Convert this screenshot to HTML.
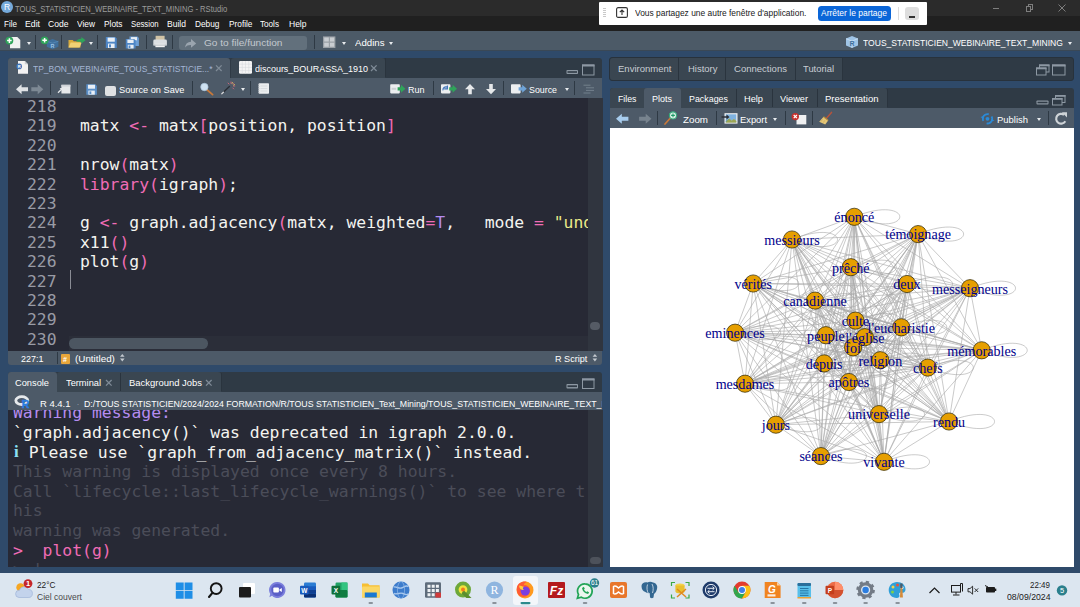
<!DOCTYPE html>
<html lang="fr">
<head>
<meta charset="utf-8">
<title>TOUS_STATISTICIEN_WEBINAIRE_TEXT_MINING - RStudio</title>
<style>
*{box-sizing:border-box;margin:0;padding:0}
html,body{width:1080px;height:607px;overflow:hidden;background:#2f4a6a}
body{position:relative;font-family:"Liberation Sans",sans-serif;font-size:10px;color:#fff}
.abs{position:absolute}
svg{position:absolute;overflow:visible}
.t{position:absolute;white-space:nowrap;line-height:1;font-size:9.3px;color:#fff;transform-origin:0 0}
.sep{position:absolute;width:1px;background:#2e3944}
.dd{position:absolute;width:0;height:0;border-left:2.5px solid transparent;border-right:2.5px solid transparent;border-top:3px solid #e8ebee}
/* window chrome */
#titlebar{left:0;top:0;width:1080px;height:15.500px;background:#2b2b2b}
#menubar{left:0;top:15.500px;width:1080px;height:15px;background:#202020}
#toolbar{left:0;top:30.500px;width:1080px;height:20.500px;background:#4c5a67;border-bottom:1px solid #3a4856}
#menubar .t{top:3px;font-size:9.7px;color:#fff;letter-spacing:-0.2px}
/* panels */
.tabrow{position:absolute;background:#2f3a45;border-radius:3px 3px 0 0}
.taboff{position:absolute;background:#3a4651;border-radius:3px 3px 0 0}
.tabon{position:absolute;background:#4d5a68;border-radius:3px 3px 0 0}
.bar{position:absolute;background:#4d5a68}
.tsep{position:absolute;width:1px;background:#2a343e}
.mono{font-family:"DejaVu Sans Mono","Liberation Mono",monospace}
#editor{left:8px;top:97.5px;width:594.5px;height:253.5px;background:#272935;overflow:hidden}
.ln{margin-top:2px;position:absolute;left:19px;font-size:16.4px;color:#999ba5;line-height:1;white-space:pre}
.cl{margin-top:2px;position:absolute;left:72px;font-size:16.4px;color:#f4f4f0;line-height:1;white-space:pre}
.pk{color:#f06cb6}.pu{color:#b58cf0}.ye{color:#ecec8a}
#console{left:8px;top:410px;width:594.5px;height:157px;background:#272935;overflow:hidden}
.co{margin-top:1.5px;position:absolute;left:5px;font-size:16.4px;line-height:1;white-space:pre;color:#f4f4f0}
.dim{color:#4b4d59}
/* taskbar */
#taskbar{left:0;top:572.5px;width:1080px;height:35px;background:#dce6f0}
</style>
</head>
<body>
<!-- ===== title bar ===== -->
<div id="titlebar" class="abs">
  <svg style="left:1px;top:1px" width="12" height="12" viewBox="0 0 12 12"><circle cx="6" cy="6" r="6" fill="#75aadb"/><text x="6" y="9" font-family="Liberation Sans, sans-serif" font-size="8.5" fill="#fff" text-anchor="middle">R</text></svg>
  <!-- window buttons -->
  <div class="abs" style="left:993px;top:8px;width:6px;height:1px;background:#7e7e7e"></div>
  <div class="abs" style="left:1027.500px;top:4px;width:5.500px;height:5.500px;border:1px solid #7e7e7e"></div><div class="abs" style="left:1025.500px;top:6px;width:5.500px;height:5.500px;border:1px solid #7e7e7e;background:#2b2b2b"></div>
  <svg style="left:1058px;top:4px" width="8" height="8" viewBox="0 0 8 8"><path d="M0.5 0.5L7.5 7.5M7.5 0.5L0.5 7.5" stroke="#7e7e7e" stroke-width="1"/></svg>
</div>

<!-- ===== menu bar ===== -->
<div id="menubar" class="abs">
</div>

<!-- ===== main toolbar ===== -->
<div id="toolbar" class="abs"></div>
<div class="abs" style="left:179px;top:36px;width:128px;height:13.500px;background:#62707c;border-radius:3px"></div>
<div class="dd" style="left:389px;top:42px"></div>
<div class="dd" style="left:1068px;top:42px"></div>
<div class="sep" style="left:35px;top:35px;height:14px"></div>
<div class="sep" style="left:61px;top:35px;height:14px"></div>
<div class="sep" style="left:97px;top:35px;height:14px"></div>
<div class="sep" style="left:146px;top:35px;height:14px"></div>
<div class="sep" style="left:172px;top:35px;height:14px"></div>
<div class="sep" style="left:314px;top:35px;height:14px"></div>
<div class="dd" style="left:27px;top:42px"></div>
<div class="dd" style="left:89px;top:42px"></div>
<div class="dd" style="left:342px;top:42px"></div>

<!-- ===== share banner ===== -->
<div class="abs" id="share" style="left:599px;top:2px;width:328px;height:22.500px;background:#fff;border-radius:1px">
  <div class="abs" style="left:4px;top:6px;width:3px;height:10px;background:repeating-linear-gradient(#c9c9c9 0 1px,#fff 1px 2px)"></div>
  <svg style="left:17px;top:5px" width="12" height="11" viewBox="0 0 12 11"><rect x="0.600" y="0.600" width="10.800" height="9.800" rx="1.500" fill="none" stroke="#333" stroke-width="1.100"/><path d="M6 8V3.200M3.800 5.200L6 3L8.200 5.200" fill="none" stroke="#333" stroke-width="1.100"/></svg>
  <div class="abs" style="left:219px;top:3.800px;width:73px;height:15.200px;background:#0b66d8;border-radius:3.500px"></div>
  <div class="abs" style="left:299px;top:5px;width:1px;height:13px;background:#dcdcdc"></div>
  <div class="abs" style="left:306px;top:4.500px;width:14px;height:13.500px;background:#dedede;border-radius:3px"></div>
  <div class="abs" style="left:310px;top:14px;width:6px;height:1.600px;background:#333"></div>
</div>
<!-- ===== main toolbar icons ===== -->
<svg style="left:0;top:31px" width="400" height="21" viewBox="0 31 400 21">
  <!-- new file -->
  <path d="M10 37h7.3l3 3v8.2H10z" fill="#f1f1f1"/>
  <circle cx="9.4" cy="40.6" r="3.9" fill="#2fa35a"/><path d="M9.4 38.3v4.6M7.1 40.6h4.6" stroke="#fff" stroke-width="1.5"/>
  <!-- new project -->
  <path d="M46.8 41.2l5.8-2.2 5.8 2.2v5.6l-5.8 2.4-5.8-2.4z" fill="#3f6f9c"/>
  <path d="M46.8 41.2l5.8 2 5.8-2" fill="none" stroke="#5d8fbd" stroke-width="0.7"/>
  <text x="52.6" y="47.6" font-family="Liberation Sans, sans-serif" font-size="5.5" font-weight="bold" fill="#9cc3e6" text-anchor="middle">R</text>
  <circle cx="44.6" cy="40.3" r="3.9" fill="#2fa35a"/><path d="M44.6 38v4.6M42.3 40.3h4.6" stroke="#fff" stroke-width="1.5"/>
  <!-- open folder -->
  <path d="M68.5 40h4.2l1.2 1.3h6.6v6.2H68.5z" fill="#d8ab3c"/>
  <path d="M68.5 47.5l2.2-5h11l-2.2 5z" fill="#f0d175"/>
  <path d="M76 41.5c1.2-2.2 3.2-2.9 5.4-2.7v-1.7l4.2 3.2-4.2 3.2v-1.8c-2-.2-3.8.1-5.4 -.2z" fill="#2fa35a"/>
  <!-- save -->
  <g id="floppy">
  <path d="M105.8 37h9.4l1.6 1.6v9.4h-11z" fill="#4e86c6"/>
  <rect x="107.6" y="37.6" width="7.2" height="4.1" fill="#e9eff6"/>
  <rect x="108" y="43.6" width="6.6" height="4.4" fill="#e9eff6"/>
  <rect x="109" y="44.4" width="2" height="3" fill="#4e86c6"/>
  </g>
  <!-- save all -->
  <path d="M129.5 36.6h8l1.4 1.4v8h-9.4z" fill="#6d9fd6"/><rect x="131" y="37.1" width="6" height="3.2" fill="#e9eff6"/>
  <path d="M125.8 39h8.3l1.5 1.5v8h-9.8z" fill="#4e86c6"/>
  <rect x="127.4" y="39.6" width="6.2" height="3.4" fill="#e9eff6"/>
  <rect x="127.8" y="44.8" width="5.8" height="3.7" fill="#e9eff6"/><rect x="128.6" y="45.5" width="1.8" height="2.5" fill="#4e86c6"/>
  <!-- print -->
  <rect x="155.6" y="35.8" width="9" height="4.6" fill="#d0c3a6"/>
  <rect x="153.3" y="39.6" width="13.6" height="6" rx="1.4" fill="#dcdfe2"/>
  <rect x="155.4" y="43.8" width="9.4" height="3.4" fill="#f3f3f3"/>
  <rect x="153.3" y="44.6" width="13.6" height="1" fill="#b9bec3"/>
  <!-- go to arrow -->
  <path d="M185 47.5c.4-3.6 2.4-5.6 6-5.8v-2.6l5.2 4.3-5.2 4.3v-2.7c-2.6-.1-4.5.7-6 2.5z" fill="#9aa4ae"/>
  <!-- grid / workspace panes -->
  <rect x="323" y="36.4" width="12.4" height="11.6" fill="#9aa0a6"/>
  <path d="M324.2 37.6h4.6v4h-4.6zM330 37.6h4.2v4H330zM324.2 42.8h4.6v4h-4.6zM330 42.8h4.2v4H330z" fill="#c9cdd1"/>
</svg>
<!-- project cube at right -->
<svg style="left:845px;top:35px" width="14" height="14" viewBox="0 0 14 14">
  <path d="M1 3.6L7 1l6 2.6v6.8L7 13 1 10.400z" fill="#9fc4e6"/>
  <path d="M1 3.6L7 6.200l6-2.600M7 6.200V13" fill="none" stroke="#d5e6f5" stroke-width="0.7"/>
  <text x="7" y="10.6" font-family="Liberation Sans, sans-serif" font-size="6.5" font-weight="bold" fill="#3f6f9c" text-anchor="middle">R</text>
</svg>
<!-- ===== source panel ===== -->
<div class="tabrow" style="left:8px;top:58px;width:594px;height:20px"></div>
<div class="taboff" style="left:231px;top:58px;width:154px;height:20px"></div>
<div class="tabon" style="left:8px;top:58px;width:222px;height:20px"></div>
<div class="tsep" style="left:385px;top:58px;height:19px"></div>
<div class="bar" style="left:8px;top:78px;width:594px;height:20px"></div>
<div class="dd" style="left:565px;top:88px"></div>
<div class="dd" style="left:241px;top:88px"></div>
<div class="sep" style="left:50px;top:81px;height:14px"></div>
<div class="sep" style="left:77px;top:81px;height:14px"></div>
<div class="sep" style="left:192px;top:81px;height:14px"></div>
<div class="sep" style="left:250px;top:81px;height:14px"></div>
<div class="sep" style="left:433px;top:81px;height:14px"></div>
<div class="sep" style="left:503px;top:81px;height:14px"></div>
<div class="sep" style="left:574px;top:81px;height:14px"></div>
<div class="abs" style="left:105px;top:86px;width:10.5px;height:9.5px;background:#dfe1e3;border-radius:2px"></div>

<div id="editor" class="abs mono">
  <div class="ln" style="top:-1px">218</div>
  <div class="ln" style="top:18px">219</div><div class="cl" style="top:18px">matx <span class="pk">&lt;-</span> matx<span class="pk">[</span>position, position<span class="pk">]</span></div>
  <div class="ln" style="top:38px">220</div>
  <div class="ln" style="top:57px">221</div><div class="cl" style="top:57px">nrow<span class="pk">(</span>matx<span class="pk">)</span></div>
  <div class="ln" style="top:77px">222</div><div class="cl" style="top:77px"><span class="pk">library(</span>igraph<span class="pk">)</span>;</div>
  <div class="ln" style="top:96px">223</div>
  <div class="ln" style="top:115px">224</div><div class="cl" style="top:115px">g <span class="pk">&lt;-</span> graph.adjacency<span class="pk">(</span>matx, weighted<span class="pk">=</span><span class="pu">T</span>,   mode <span class="pk">=</span> <span class="ye">"undirected"</span><span class="pk">)</span></div>
  <div class="ln" style="top:135px">225</div><div class="cl" style="top:135px">x11<span class="pk">()</span></div>
  <div class="ln" style="top:154px">226</div><div class="cl" style="top:154px">plot<span class="pk">(</span>g<span class="pk">)</span></div>
  <div class="ln" style="top:174px">227</div>
  <div class="ln" style="top:193px">228</div>
  <div class="ln" style="top:212px">229</div>
  <div class="ln" style="top:232px">230</div>
  <!-- cursor -->
  <div class="abs" style="left:62px;top:172px;width:1px;height:19px;background:#8a8c95"></div>
  <!-- v scrollbar track -->
  <div class="abs" style="left:580px;top:0;width:15px;height:254px;background:#30353f"></div>
  <div class="abs" style="left:582px;top:224px;width:10px;height:8.500px;border-radius:4.500px;background:#555b65"></div>
  <!-- h scrollbar -->
  <div class="abs" style="left:61px;top:238.500px;width:519px;height:15.500px;background:#2b2e39"></div>
  <div class="abs" style="left:61px;top:240.500px;width:139px;height:10.500px;border-radius:5.200px;background:#4c5661"></div>
</div>
<div class="bar" style="left:8px;top:351px;width:594px;height:14px;border-radius:0 0 3px 3px"></div>
<div class="sep" style="left:57px;top:352px;height:12px"></div>
<div class="abs" style="left:60.500px;top:354px;width:9.500px;height:9.500px;background:#e9a63a;border-radius:1px"></div>
<div class="t" style="left:63px;top:355.500px;font-size:7px;color:#fff;font-weight:bold">#</div>
<!-- ===== source pane icons ===== -->
<svg style="left:0;top:57px" width="610" height="42" viewBox="0 57 610 42">
  <!-- R file icon -->
  <path d="M18 61h6.8l3.2 3.200v9.600H18z" fill="#f2f2f2"/><path d="M24.8 61v3.200H28z" fill="#c9cdd2"/>
  <circle cx="19.200" cy="66.400" r="2.800" fill="#3f73b8"/>
  <text x="19.200" y="68" font-family="Liberation Sans, sans-serif" font-size="4.200" font-weight="bold" fill="#fff" text-anchor="middle">R</text>
  <!-- table icon -->
  <rect x="239" y="61" width="13" height="12.800" rx="1.300" fill="#f4f4f4"/>
  <path d="M239 64.200h13M239 67.400h13M239 70.600h13M242.250 61v12.800M245.500 61v12.800M248.750 61v12.800" stroke="#d3d6da" stroke-width="0.500"/>
  <!-- back / forward -->
  <path d="M16 89.300l5.600-5v3h6.400v4h-6.400v3z" fill="#dfe2e5"/>
  <path d="M43.300 89.300l-5.600-5v3h-6.400v4h6.400v3z" fill="#7d8994"/>
  <!-- pop-out -->
  <rect x="61.400" y="84.800" width="9" height="8.700" fill="#e6e8ea"/>
  <rect x="61.400" y="84.800" width="9" height="1.800" fill="#cfd3d7"/>
  <path d="M58 92.800l4-4" stroke="#e6e8ea" stroke-width="1.300"/><path d="M59.600 88h3.400v3.400z" fill="#e6e8ea"/>
  <!-- save -->
  <path d="M86.300 84.300h9l1.600 1.600v8.800H86.300z" fill="#5b90c9"/>
  <rect x="88" y="84.800" width="7" height="3.900" fill="#e9eff6"/>
  <rect x="88.400" y="90.600" width="6.400" height="4.100" fill="#e9eff6"/><rect x="89.400" y="91.400" width="1.900" height="2.700" fill="#5b90c9"/>
  <!-- magnifier -->
  <path d="M207 89.800l5.600 4.800" stroke="#c8793a" stroke-width="1.800" stroke-linecap="round"/>
  <circle cx="204.400" cy="87" r="3.700" fill="#cfe2f2" stroke="#a9c4dc" stroke-width="0.700"/>
  <!-- wand -->
  <path d="M221.800 93.800l7.600-7.400" stroke="#2b2f36" stroke-width="1.400" stroke-linecap="round"/>
  <path d="M221.800 93.800l1.600-1.500" stroke="#d8dadd" stroke-width="1.400" stroke-linecap="round"/>
  <path d="M231 81.600v2.200M234 82.800l-1.500 1.500M235.200 86h-2.200M234 89.200l-1.500-1.500M227.800 82.800l1.500 1.500" stroke="#e8677d" stroke-width="0.800"/>
  <path d="M232.600 82l-.7 1.800M235 84.400l-1.800.7" stroke="#f0d060" stroke-width="0.700"/>
  <!-- notebook -->
  <rect x="258.600" y="83.200" width="10.400" height="10.600" rx="0.800" fill="#eceef0"/>
  <path d="M260.500 86h6.800M260.500 88.500h6.800M260.500 91h6.800" stroke="#cdd1d5" stroke-width="0.600"/>
  <path d="M258 84.500h1.400M258 86.500h1.400M258 88.500h1.400M258 90.500h1.400M258 92.500h1.400" stroke="#aab0b6" stroke-width="0.700"/>
  <!-- Run -->
  <rect x="390.200" y="84.200" width="9.600" height="9.200" rx="0.800" fill="#eceef0"/>
  <path d="M391.600 87.800h4.600v2h-4.600z" fill="#cdd1d5"/>
  <path d="M397.600 87.200h3.400v-2.400l4.400 4-4.400 4v-2.400h-3.400z" fill="#2fa35a"/>
  <!-- re-run -->
  <rect x="441" y="84.200" width="9.400" height="9.200" rx="0.800" fill="#eceef0"/>
  <path d="M443 90.400c-.4-2.600 1.600-4 4.400-3.200M447.400 85.600v3.200h-3.200" fill="none" stroke="#3f73b8" stroke-width="1.200"/>
  <path d="M449.200 87.200h3.400v-2.400l4.400 4-4.400 4v-2.400h-3.400z" fill="#2fa35a"/>
  <!-- up / down -->
  <path d="M470 84l5 5.200h-3.200v5h-3.600v-5H465z" fill="#e6e8ea"/>
  <path d="M491 94.200l5-5.200h-3.200v-5h-3.600v5H486z" fill="#e6e8ea"/>
  <!-- source icon -->
  <rect x="511" y="84.200" width="9.600" height="9.200" rx="0.800" fill="#eceef0"/>
  <path d="M518.600 87.200h3.600v-2.400l4.600 4-4.600 4v-2.400h-3.600z" fill="#6fa4d8"/>
  <!-- outline -->
  <path d="M583.500 85.200h7M586 87.800h8M586 90.400h8M583.500 93h7" stroke="#73808c" stroke-width="1"/>
  <!-- min / max -->
  <rect x="566.500" y="70" width="11.500" height="4" rx="0.800" fill="#8d98a3"/><rect x="567.500" y="71.200" width="9.500" height="1.600" fill="#2f3a45"/>
  <rect x="582.500" y="65" width="11.500" height="10" fill="none" stroke="#8d98a3" stroke-width="1"/><rect x="582" y="64.500" width="12.500" height="2" fill="#8d98a3"/>
</svg>
<!-- ===== console panel ===== -->
<div class="tabrow" style="left:8px;top:372px;width:594px;height:20px"></div>
<div class="taboff" style="left:57px;top:372px;width:164px;height:20px"></div>
<div class="tabon" style="left:8px;top:372px;width:49px;height:20px"></div>
<div class="tsep" style="left:120px;top:373px;height:18px"></div>
<div class="tsep" style="left:221px;top:373px;height:18px"></div>
<div class="bar" style="left:8px;top:392px;width:594px;height:18px"></div>
<div id="console" class="abs mono">
  <div class="co" style="top:-7px;color:#b58cf0">Warning message:</div>
  <div class="co" style="top:13px">`graph.adjacency()` was deprecated in igraph 2.0.0.</div>
  <div class="co" style="top:33px;padding-left:15.800px"><span style="position:absolute;left:1px;top:-1.500px;color:#8be0f5;font-weight:bold;font-family:'Liberation Serif',serif;font-size:17px;line-height:1">i</span>Please use `graph_from_adjacency_matrix()` instead.</div>
  <div class="co dim" style="top:52px">This warning is displayed once every 8 hours.</div>
  <div class="co dim" style="top:72px">Call `lifecycle::last_lifecycle_warnings()` to see where t</div>
  <div class="co dim" style="top:91px">his</div>
  <div class="co dim" style="top:111px">warning was generated.</div>
  <div class="co" style="top:131px;color:#f06cb6">&gt;  plot(g)</div>
  <div class="co dim" style="top:150px">&gt; |</div>
  <div class="abs" style="left:580px;top:0;width:15px;height:157px;background:#30353f"></div>
  <div class="abs" style="left:582px;top:146.500px;width:10.500px;height:7.500px;border-radius:4px;background:#4d525b"></div>
</div>
<!-- ===== console pane icons ===== -->
<svg style="left:0;top:371px" width="610" height="40" viewBox="0 371 610 40">
  <!-- R logo -->
  <ellipse cx="21.800" cy="400.600" rx="6" ry="3.900" fill="none" stroke="#e6e9ec" stroke-width="2.800"/>
  <text x="25.600" y="407.800" font-family="Liberation Sans, sans-serif" font-size="10.500" font-weight="bold" fill="#2a7de1" stroke="#2a7de1" stroke-width="0.500" text-anchor="middle">R</text>
  <!-- min / max -->
  <rect x="566.500" y="384" width="11.500" height="4.500" rx="0.800" fill="#8d98a3"/><rect x="567.500" y="385.300" width="9.500" height="1.800" fill="#2f3a45"/>
  <rect x="582.500" y="379" width="11.500" height="9.500" fill="none" stroke="#8d98a3" stroke-width="1"/><rect x="582" y="378.500" width="12.500" height="2" fill="#8d98a3"/>
</svg>
<!-- close marks and steppers -->
<svg style="left:0;top:0" width="610" height="400" viewBox="0 0 610 400">
<path d="M216 65.4l5.6 5.6M221.6 65.4l-5.6 5.6" stroke="#7f8b97" stroke-width="1.300" fill="none"/>
<path d="M371 65.4l5.6 5.6M376.6 65.4l-5.6 5.6" stroke="#7f8b97" stroke-width="1.300" fill="none"/>
<path d="M106 380l5.6 5.6M111.6 380l-5.6 5.6" stroke="#7f8b97" stroke-width="1.300" fill="none"/>
<path d="M206 380l5.6 5.6M211.6 380l-5.6 5.6" stroke="#7f8b97" stroke-width="1.300" fill="none"/>
<path d="M120 356.8l2.300-2.800 2.300 2.800zM120 358.6l2.300 2.800 2.300-2.800z" fill="#c3c9cf"/>
<path d="M592.6 356.8l2.300-2.800 2.300 2.800zM592.6 358.6l2.300 2.800 2.300-2.800z" fill="#c3c9cf"/>
</svg>
<!-- ===== environment panel (collapsed) ===== -->
<div class="abs" style="left:609px;top:57px;width:465px;height:24px;background:#2f3a45;border-radius:3px;border:1px solid #28323c"></div>
<div class="taboff" style="left:610px;top:58px;width:232px;height:22px;border-radius:3px 0 0 3px"></div>
<div class="tsep" style="left:678px;top:58px;height:22px"></div>
<div class="tsep" style="left:725px;top:58px;height:22px"></div>
<div class="tsep" style="left:795px;top:58px;height:22px"></div>
<div class="tsep" style="left:842px;top:58px;height:22px"></div>

<!-- ===== plots panel ===== -->
<div class="tabrow" style="left:610px;top:88px;width:464px;height:20px"></div>
<div class="taboff" style="left:610px;top:88px;width:277px;height:20px"></div>
<div class="tabon" style="left:643.500px;top:88px;width:37px;height:20px"></div>
<div class="tsep" style="left:736px;top:89px;height:18px"></div>
<div class="tsep" style="left:772px;top:89px;height:18px"></div>
<div class="tsep" style="left:817px;top:89px;height:18px"></div>
<div class="tsep" style="left:887px;top:89px;height:18px"></div>
<div class="bar" style="left:610px;top:108px;width:464px;height:20px"></div>
<div class="dd" style="left:773px;top:118px"></div>
<div class="dd" style="left:1037px;top:118px"></div>
<div class="sep" style="left:657px;top:111px;height:14px"></div>
<div class="sep" style="left:716px;top:111px;height:14px"></div>
<div class="sep" style="left:785px;top:111px;height:14px"></div>
<div class="sep" style="left:812px;top:111px;height:14px"></div>
<div class="sep" style="left:1048px;top:111px;height:14px"></div>
<div class="abs" id="plot" style="left:610px;top:128px;width:463.500px;height:439px;background:#fff">
<svg class="abs" style="left:0;top:0" width="464" height="440" viewBox="610 128 464 440">
<path d="M854.3 216.8L918.1 234.1M854.3 216.8L792.0 239.5M854.3 216.8L850.8 267.2M854.3 216.8L907.0 284.0M854.3 216.8L970.0 288.2M854.3 216.8L753.2 283.5M854.3 216.8L815.0 300.6M854.3 216.8L855.5 320.6M854.3 216.8L901.3 327.3M854.3 216.8L825.9 335.2M854.3 216.8L864.9 337.2M854.3 216.8L853.1 347.3M854.3 216.8L735.1 332.7M854.3 216.8L981.7 350.3M854.3 216.8L824.1 363.4M854.3 216.8L880.3 360.2M854.3 216.8L927.8 367.6M854.3 216.8L848.9 382.0M854.3 216.8L745.0 383.7M854.3 216.8L879.0 414.1M854.3 216.8L949.0 421.5M854.3 216.8L775.9 424.7M854.3 216.8L820.9 456.1M854.3 216.8L884.0 461.8M918.1 234.1L792.0 239.5M918.1 234.1L850.8 267.2M918.1 234.1L907.0 284.0M918.1 234.1L970.0 288.2M918.1 234.1L753.2 283.5M918.1 234.1L815.0 300.6M918.1 234.1L855.5 320.6M918.1 234.1L901.3 327.3M918.1 234.1L825.9 335.2M918.1 234.1L864.9 337.2M918.1 234.1L853.1 347.3M918.1 234.1L735.1 332.7M918.1 234.1L981.7 350.3M918.1 234.1L824.1 363.4M918.1 234.1L880.3 360.2M918.1 234.1L927.8 367.6M918.1 234.1L848.9 382.0M918.1 234.1L745.0 383.7M918.1 234.1L879.0 414.1M918.1 234.1L949.0 421.5M918.1 234.1L775.9 424.7M918.1 234.1L820.9 456.1M918.1 234.1L884.0 461.8M792.0 239.5L850.8 267.2M792.0 239.5L907.0 284.0M792.0 239.5L970.0 288.2M792.0 239.5L753.2 283.5M792.0 239.5L815.0 300.6M792.0 239.5L855.5 320.6M792.0 239.5L901.3 327.3M792.0 239.5L825.9 335.2M792.0 239.5L864.9 337.2M792.0 239.5L853.1 347.3M792.0 239.5L735.1 332.7M792.0 239.5L981.7 350.3M792.0 239.5L824.1 363.4M792.0 239.5L880.3 360.2M792.0 239.5L927.8 367.6M792.0 239.5L848.9 382.0M792.0 239.5L745.0 383.7M792.0 239.5L879.0 414.1M792.0 239.5L949.0 421.5M792.0 239.5L775.9 424.7M792.0 239.5L820.9 456.1M792.0 239.5L884.0 461.8M850.8 267.2L907.0 284.0M850.8 267.2L970.0 288.2M850.8 267.2L753.2 283.5M850.8 267.2L815.0 300.6M850.8 267.2L855.5 320.6M850.8 267.2L901.3 327.3M850.8 267.2L825.9 335.2M850.8 267.2L864.9 337.2M850.8 267.2L853.1 347.3M850.8 267.2L735.1 332.7M850.8 267.2L981.7 350.3M850.8 267.2L824.1 363.4M850.8 267.2L880.3 360.2M850.8 267.2L927.8 367.6M850.8 267.2L848.9 382.0M850.8 267.2L745.0 383.7M850.8 267.2L879.0 414.1M850.8 267.2L949.0 421.5M850.8 267.2L775.9 424.7M850.8 267.2L820.9 456.1M850.8 267.2L884.0 461.8M907.0 284.0L970.0 288.2M907.0 284.0L753.2 283.5M907.0 284.0L815.0 300.6M907.0 284.0L855.5 320.6M907.0 284.0L901.3 327.3M907.0 284.0L825.9 335.2M907.0 284.0L864.9 337.2M907.0 284.0L853.1 347.3M907.0 284.0L735.1 332.7M907.0 284.0L981.7 350.3M907.0 284.0L824.1 363.4M907.0 284.0L880.3 360.2M907.0 284.0L927.8 367.6M907.0 284.0L848.9 382.0M907.0 284.0L745.0 383.7M907.0 284.0L879.0 414.1M907.0 284.0L949.0 421.5M907.0 284.0L775.9 424.7M907.0 284.0L820.9 456.1M907.0 284.0L884.0 461.8M970.0 288.2L753.2 283.5M970.0 288.2L815.0 300.6M970.0 288.2L855.5 320.6M970.0 288.2L901.3 327.3M970.0 288.2L825.9 335.2M970.0 288.2L864.9 337.2M970.0 288.2L853.1 347.3M970.0 288.2L735.1 332.7M970.0 288.2L981.7 350.3M970.0 288.2L824.1 363.4M970.0 288.2L880.3 360.2M970.0 288.2L927.8 367.6M970.0 288.2L848.9 382.0M970.0 288.2L745.0 383.7M970.0 288.2L879.0 414.1M970.0 288.2L949.0 421.5M970.0 288.2L775.9 424.7M970.0 288.2L820.9 456.1M970.0 288.2L884.0 461.8M753.2 283.5L815.0 300.6M753.2 283.5L855.5 320.6M753.2 283.5L901.3 327.3M753.2 283.5L825.9 335.2M753.2 283.5L864.9 337.2M753.2 283.5L853.1 347.3M753.2 283.5L735.1 332.7M753.2 283.5L981.7 350.3M753.2 283.5L824.1 363.4M753.2 283.5L880.3 360.2M753.2 283.5L927.8 367.6M753.2 283.5L848.9 382.0M753.2 283.5L745.0 383.7M753.2 283.5L879.0 414.1M753.2 283.5L949.0 421.5M753.2 283.5L775.9 424.7M753.2 283.5L820.9 456.1M753.2 283.5L884.0 461.8M815.0 300.6L855.5 320.6M815.0 300.6L901.3 327.3M815.0 300.6L825.9 335.2M815.0 300.6L864.9 337.2M815.0 300.6L853.1 347.3M815.0 300.6L735.1 332.7M815.0 300.6L981.7 350.3M815.0 300.6L824.1 363.4M815.0 300.6L880.3 360.2M815.0 300.6L927.8 367.6M815.0 300.6L848.9 382.0M815.0 300.6L745.0 383.7M815.0 300.6L879.0 414.1M815.0 300.6L949.0 421.5M815.0 300.6L775.9 424.7M815.0 300.6L820.9 456.1M815.0 300.6L884.0 461.8M855.5 320.6L901.3 327.3M855.5 320.6L825.9 335.2M855.5 320.6L864.9 337.2M855.5 320.6L853.1 347.3M855.5 320.6L735.1 332.7M855.5 320.6L981.7 350.3M855.5 320.6L824.1 363.4M855.5 320.6L880.3 360.2M855.5 320.6L927.8 367.6M855.5 320.6L848.9 382.0M855.5 320.6L745.0 383.7M855.5 320.6L879.0 414.1M855.5 320.6L949.0 421.5M855.5 320.6L775.9 424.7M855.5 320.6L820.9 456.1M855.5 320.6L884.0 461.8M901.3 327.3L825.9 335.2M901.3 327.3L864.9 337.2M901.3 327.3L853.1 347.3M901.3 327.3L735.1 332.7M901.3 327.3L981.7 350.3M901.3 327.3L824.1 363.4M901.3 327.3L880.3 360.2M901.3 327.3L927.8 367.6M901.3 327.3L848.9 382.0M901.3 327.3L745.0 383.7M901.3 327.3L879.0 414.1M901.3 327.3L949.0 421.5M901.3 327.3L775.9 424.7M901.3 327.3L820.9 456.1M901.3 327.3L884.0 461.8M825.9 335.2L864.9 337.2M825.9 335.2L853.1 347.3M825.9 335.2L735.1 332.7M825.9 335.2L981.7 350.3M825.9 335.2L824.1 363.4M825.9 335.2L880.3 360.2M825.9 335.2L927.8 367.6M825.9 335.2L848.9 382.0M825.9 335.2L745.0 383.7M825.9 335.2L879.0 414.1M825.9 335.2L949.0 421.5M825.9 335.2L775.9 424.7M825.9 335.2L820.9 456.1M825.9 335.2L884.0 461.8M864.9 337.2L853.1 347.3M864.9 337.2L735.1 332.7M864.9 337.2L981.7 350.3M864.9 337.2L824.1 363.4M864.9 337.2L880.3 360.2M864.9 337.2L927.8 367.6M864.9 337.2L848.9 382.0M864.9 337.2L745.0 383.7M864.9 337.2L879.0 414.1M864.9 337.2L949.0 421.5M864.9 337.2L775.9 424.7M864.9 337.2L820.9 456.1M864.9 337.2L884.0 461.8M853.1 347.3L735.1 332.7M853.1 347.3L981.7 350.3M853.1 347.3L824.1 363.4M853.1 347.3L880.3 360.2M853.1 347.3L927.8 367.6M853.1 347.3L848.9 382.0M853.1 347.3L745.0 383.7M853.1 347.3L879.0 414.1M853.1 347.3L949.0 421.5M853.1 347.3L775.9 424.7M853.1 347.3L820.9 456.1M853.1 347.3L884.0 461.8M735.1 332.7L981.7 350.3M735.1 332.7L824.1 363.4M735.1 332.7L880.3 360.2M735.1 332.7L927.8 367.6M735.1 332.7L848.9 382.0M735.1 332.7L745.0 383.7M735.1 332.7L879.0 414.1M735.1 332.7L949.0 421.5M735.1 332.7L775.9 424.7M735.1 332.7L820.9 456.1M735.1 332.7L884.0 461.8M981.7 350.3L824.1 363.4M981.7 350.3L880.3 360.2M981.7 350.3L927.8 367.6M981.7 350.3L848.9 382.0M981.7 350.3L745.0 383.7M981.7 350.3L879.0 414.1M981.7 350.3L949.0 421.5M981.7 350.3L775.9 424.7M981.7 350.3L820.9 456.1M981.7 350.3L884.0 461.8M824.1 363.4L880.3 360.2M824.1 363.4L927.8 367.6M824.1 363.4L848.9 382.0M824.1 363.4L745.0 383.7M824.1 363.4L879.0 414.1M824.1 363.4L949.0 421.5M824.1 363.4L775.9 424.7M824.1 363.4L820.9 456.1M824.1 363.4L884.0 461.8M880.3 360.2L927.8 367.6M880.3 360.2L848.9 382.0M880.3 360.2L745.0 383.7M880.3 360.2L879.0 414.1M880.3 360.2L949.0 421.5M880.3 360.2L775.9 424.7M880.3 360.2L820.9 456.1M880.3 360.2L884.0 461.8M927.8 367.6L848.9 382.0M927.8 367.6L745.0 383.7M927.8 367.6L879.0 414.1M927.8 367.6L949.0 421.5M927.8 367.6L775.9 424.7M927.8 367.6L820.9 456.1M927.8 367.6L884.0 461.8M848.9 382.0L745.0 383.7M848.9 382.0L879.0 414.1M848.9 382.0L949.0 421.5M848.9 382.0L775.9 424.7M848.9 382.0L820.9 456.1M848.9 382.0L884.0 461.8M745.0 383.7L879.0 414.1M745.0 383.7L949.0 421.5M745.0 383.7L775.9 424.7M745.0 383.7L820.9 456.1M745.0 383.7L884.0 461.8M879.0 414.1L949.0 421.5M879.0 414.1L775.9 424.7M879.0 414.1L820.9 456.1M879.0 414.1L884.0 461.8M949.0 421.5L775.9 424.7M949.0 421.5L820.9 456.1M949.0 421.5L884.0 461.8M775.9 424.7L820.9 456.1M775.9 424.7L884.0 461.8M820.9 456.1L884.0 461.8" fill="none" stroke="#a9a9a9" stroke-width="0.62"/>
<path d="M854.3 216.8C915.0 241.3 915.0 192.3 854.3 216.8M918.1 234.1C978.8 258.6 978.8 209.6 918.1 234.1M792.0 239.5C852.7 264.0 852.7 215.0 792.0 239.5M850.8 267.2C911.5 291.7 911.5 242.7 850.8 267.2M907.0 284.0C967.7 308.5 967.7 259.5 907.0 284.0M970.0 288.2C1030.7 312.7 1030.7 263.7 970.0 288.2M753.2 283.5C813.9 308.0 813.9 259.0 753.2 283.5M815.0 300.6C875.7 325.1 875.7 276.1 815.0 300.6M855.5 320.6C916.2 345.1 916.2 296.1 855.5 320.6M901.3 327.3C962.0 351.8 962.0 302.8 901.3 327.3M825.9 335.2C886.6 359.7 886.6 310.7 825.9 335.2M864.9 337.2C925.6 361.7 925.6 312.7 864.9 337.2M853.1 347.3C913.8 371.8 913.8 322.8 853.1 347.3M735.1 332.7C795.8 357.2 795.8 308.2 735.1 332.7M981.7 350.3C1042.4 374.8 1042.4 325.8 981.7 350.3M824.1 363.4C884.8 387.9 884.8 338.9 824.1 363.4M880.3 360.2C941.0 384.7 941.0 335.7 880.3 360.2M927.8 367.6C988.5 392.1 988.5 343.1 927.8 367.6M848.9 382.0C909.6 406.5 909.6 357.5 848.9 382.0M745.0 383.7C805.7 408.2 805.7 359.2 745.0 383.7M879.0 414.1C939.7 438.6 939.7 389.6 879.0 414.1M949.0 421.5C1009.7 446.0 1009.7 397.0 949.0 421.5M775.9 424.7C836.6 449.2 836.6 400.2 775.9 424.7M820.9 456.1C881.6 480.6 881.6 431.6 820.9 456.1M884.0 461.8C944.7 486.3 944.7 437.3 884.0 461.8" fill="none" stroke="#a0a0a0" stroke-width="0.55"/>
<circle cx="854.3" cy="216.8" r="8.6" fill="#e69f00" stroke="#2a2200" stroke-width="0.7"/>
<circle cx="918.1" cy="234.1" r="8.6" fill="#e69f00" stroke="#2a2200" stroke-width="0.7"/>
<circle cx="792.0" cy="239.5" r="8.6" fill="#e69f00" stroke="#2a2200" stroke-width="0.7"/>
<circle cx="850.8" cy="267.2" r="8.6" fill="#e69f00" stroke="#2a2200" stroke-width="0.7"/>
<circle cx="907.0" cy="284.0" r="8.6" fill="#e69f00" stroke="#2a2200" stroke-width="0.7"/>
<circle cx="970.0" cy="288.2" r="8.6" fill="#e69f00" stroke="#2a2200" stroke-width="0.7"/>
<circle cx="753.2" cy="283.5" r="8.6" fill="#e69f00" stroke="#2a2200" stroke-width="0.7"/>
<circle cx="815.0" cy="300.6" r="8.6" fill="#e69f00" stroke="#2a2200" stroke-width="0.7"/>
<circle cx="855.5" cy="320.6" r="8.6" fill="#e69f00" stroke="#2a2200" stroke-width="0.7"/>
<circle cx="901.3" cy="327.3" r="8.6" fill="#e69f00" stroke="#2a2200" stroke-width="0.7"/>
<circle cx="825.9" cy="335.2" r="8.6" fill="#e69f00" stroke="#2a2200" stroke-width="0.7"/>
<circle cx="864.9" cy="337.2" r="8.6" fill="#e69f00" stroke="#2a2200" stroke-width="0.7"/>
<circle cx="853.1" cy="347.3" r="8.6" fill="#e69f00" stroke="#2a2200" stroke-width="0.7"/>
<circle cx="735.1" cy="332.7" r="8.6" fill="#e69f00" stroke="#2a2200" stroke-width="0.7"/>
<circle cx="981.7" cy="350.3" r="8.6" fill="#e69f00" stroke="#2a2200" stroke-width="0.7"/>
<circle cx="824.1" cy="363.4" r="8.6" fill="#e69f00" stroke="#2a2200" stroke-width="0.7"/>
<circle cx="880.3" cy="360.2" r="8.6" fill="#e69f00" stroke="#2a2200" stroke-width="0.7"/>
<circle cx="927.8" cy="367.6" r="8.6" fill="#e69f00" stroke="#2a2200" stroke-width="0.7"/>
<circle cx="848.9" cy="382.0" r="8.6" fill="#e69f00" stroke="#2a2200" stroke-width="0.7"/>
<circle cx="745.0" cy="383.7" r="8.6" fill="#e69f00" stroke="#2a2200" stroke-width="0.7"/>
<circle cx="879.0" cy="414.1" r="8.6" fill="#e69f00" stroke="#2a2200" stroke-width="0.7"/>
<circle cx="949.0" cy="421.5" r="8.6" fill="#e69f00" stroke="#2a2200" stroke-width="0.7"/>
<circle cx="775.9" cy="424.7" r="8.6" fill="#e69f00" stroke="#2a2200" stroke-width="0.7"/>
<circle cx="820.9" cy="456.1" r="8.6" fill="#e69f00" stroke="#2a2200" stroke-width="0.7"/>
<circle cx="884.0" cy="461.8" r="8.6" fill="#e69f00" stroke="#2a2200" stroke-width="0.7"/>
<g font-family="Liberation Serif, serif" font-size="14.1" fill="#00008b" text-anchor="middle">
<text x="854.3" y="222.1">énoncé</text>
<text x="918.1" y="239.4">témoignage</text>
<text x="792.0" y="244.8">messieurs</text>
<text x="850.8" y="272.5">prêché</text>
<text x="907.0" y="289.3">deux</text>
<text x="970.0" y="293.5">messeigneurs</text>
<text x="753.2" y="288.8">vérités</text>
<text x="815.0" y="305.9">canadienne</text>
<text x="855.5" y="325.9">culte</text>
<text x="901.3" y="332.6">l'eucharistie</text>
<text x="825.9" y="340.5">peuple</text>
<text x="864.9" y="342.5">l'église</text>
<text x="853.1" y="352.6">foi</text>
<text x="735.1" y="338.0">eminences</text>
<text x="981.7" y="355.6">mémorables</text>
<text x="824.1" y="368.7">depuis</text>
<text x="880.3" y="365.5">religion</text>
<text x="927.8" y="372.9">chefs</text>
<text x="848.9" y="387.3">apôtres</text>
<text x="745.0" y="389.0">mesdames</text>
<text x="879.0" y="419.4">universelle</text>
<text x="949.0" y="426.8">rendu</text>
<text x="775.9" y="430.0">jours</text>
<text x="820.9" y="461.4">séances</text>
<text x="884.0" y="467.1">vivante</text>
</g></svg>
</div>
<!-- ===== taskbar ===== -->
<div id="taskbar" class="abs">
</div>
<!-- ===== taskbar icons ===== -->
<div class="abs" style="left:512.500px;top:575.500px;width:25px;height:29.500px;background:#f3f6fa;border-radius:3px"></div>
<svg style="left:0;top:572px" width="1080" height="35" viewBox="0 572 1080 35" font-family="Liberation Sans, sans-serif">
  <!-- weather -->
  <circle cx="20.500" cy="587.500" r="4.200" fill="#f5a623"/>
  <path d="M19 597.500a3.600 3.600 0 0 1 .400-7.200 5 5 0 0 1 9.200-.800 4 4 0 0 1 -.400 8z" fill="#c3d3ec" stroke="#9fb5d9" stroke-width="0.700"/>
  <circle cx="28" cy="583.600" r="4.400" fill="#c4262a"/>
  <text x="28" y="586.300" font-size="7.500" font-weight="bold" fill="#fff" text-anchor="middle">1</text>
  <!-- windows -->
  <path d="M175.800 582.500h7.900v7.700h-7.900zM184.600 582.500h7.900v7.700h-7.900zM175.800 591.100h7.900v7.700h-7.900zM184.600 591.100h7.900v7.700h-7.900z" fill="#1f8ee6"/>
  <!-- search -->
  <circle cx="216.200" cy="588.600" r="5.400" fill="none" stroke="#151515" stroke-width="1.900"/>
  <path d="M212.400 592.800l-3.400 4.200" stroke="#151515" stroke-width="2.100" stroke-linecap="round"/>
  <!-- task view -->
  <rect x="243" y="583" width="12" height="11" rx="1" fill="#fff"/>
  <rect x="239" y="587" width="12" height="10.600" rx="1" fill="#1c1c1c"/>
  <!-- teams chat -->
  <path d="M277.500 582a8 8 0 1 1-5.500 13.800l-2.600 1.400.800-3.200a8 8 0 0 1 7.300-12z" fill="#7b7fdc"/>
  <circle cx="277.500" cy="590" r="6.200" fill="#5b5fc7"/>
  <rect x="273.300" y="587.600" width="5.600" height="4.800" rx="1" fill="#fff"/><path d="M279.400 589.600l2.400-1.600v4l-2.400-1.600z" fill="#fff"/>
  <!-- word -->
  <rect x="304" y="582.500" width="12" height="15" rx="1.200" fill="#2b7cd3"/>
  <rect x="304" y="586.300" width="12" height="3.700" fill="#185abd"/><rect x="304" y="590" width="12" height="3.700" fill="#103f91"/><rect x="304" y="593.700" width="12" height="3.800" rx="1" fill="#0b2f73"/>
  <rect x="300" y="585.800" width="8.600" height="8.600" rx="1" fill="#185abd"/>
  <text x="304.300" y="592.600" font-size="6.500" font-weight="bold" fill="#fff" text-anchor="middle">W</text>
  <!-- excel -->
  <rect x="335.500" y="582.500" width="12" height="15" rx="1.200" fill="#21a366"/>
  <rect x="335.500" y="590" width="12" height="7.500" rx="1" fill="#107c41"/><rect x="341.500" y="582.500" width="6" height="7.500" fill="#33c481"/>
  <rect x="331.500" y="585.800" width="8.600" height="8.600" rx="1" fill="#0e703a"/>
  <text x="335.800" y="592.600" font-size="6.500" font-weight="bold" fill="#fff" text-anchor="middle">X</text>
  <!-- explorer -->
  <path d="M362 583.500h6l1.600 1.800h10v12.200H362z" fill="#f6bf34"/>
  <rect x="362" y="586.500" width="17.600" height="11" rx="1" fill="#fbd765"/>
  <rect x="364.800" y="592.500" width="12" height="5" fill="#1a78d2"/>
  <!-- globe -->
  <circle cx="401" cy="590" r="8.500" fill="#3d7ccc"/>
  <path d="M393.500 587c3-1 5 2 8 1s4-3 7-1.500M394 593.500c3 1.500 6-1.500 9 0s3.500 1.500 5.500.500" fill="none" stroke="#a9c9ee" stroke-width="1.400"/>
  <ellipse cx="401" cy="590" rx="3.600" ry="8.500" fill="none" stroke="#8fb7e6" stroke-width="0.700"/>
  <!-- grid app -->
  <rect x="425" y="582.300" width="16" height="15.400" rx="1.200" fill="#5e6c7b"/>
  <path d="M427.500 584.800h3v3h-3zM431.700 584.800h3v3h-3zM435.900 584.800h3v3h-3zM427.500 589h3v3h-3zM431.700 589h3v3h-3zM435.900 589h3v3h-3zM427.500 593.200h3v3h-3zM431.700 593.200h3v3h-3z" fill="#eef1f4"/>
  <rect x="435.400" y="592.600" width="5.600" height="5" fill="#d13a3a"/>
  <!-- qgis -->
  <circle cx="463" cy="589.600" r="6.200" fill="#f3e23c" stroke="#6da83a" stroke-width="3.600"/>
  <path d="M463.500 590l8 8h-5.200l-4.600-4.600z" fill="#5b8f2e"/>
  <circle cx="463" cy="589.600" r="2" fill="#ee7d1d"/>
  <!-- R -->
  <circle cx="494.500" cy="590" r="8.600" fill="#8fb5df"/>
  <text x="494.500" y="594.200" font-family="Liberation Serif, serif" font-size="12" fill="#fff" text-anchor="middle">R</text>
  <!-- firefox -->
  <circle cx="525" cy="590" r="8.500" fill="#ff9a1f"/>
  <path d="M517 587c1-4 6-6.500 10-5 -2 .500-3 1.500-3 3 3-.500 6 2 6 5.500 0 3.500-3 6.500-6.500 6.500-4.500 0-7.500-4-6.500-10z" fill="#ff5a36"/>
  <circle cx="525.200" cy="591" r="4.600" fill="#7a3fe0"/>
  <path d="M519 585.500c2 0 3 1 5 1.200-1.500 1-1.500 2.500 0 3.300-2 .500-4.500-.500-5-4.500z" fill="#ffcf3a"/>
  <rect x="520.500" y="602" width="10" height="2.200" rx="1.100" fill="#2b8a8c"/>
  <!-- filezilla -->
  <rect x="548" y="582" width="17" height="16" rx="1" fill="#b4191d"/>
  <text x="556.500" y="595" font-size="12" font-weight="bold" font-style="italic" fill="#fff" text-anchor="middle">Fz</text>
  <!-- whatsapp -->
  <path d="M585 583.800a7.200 7.200 0 1 1-3.700 13.400l-3.900 1.100 1.100-3.800a7.200 7.200 0 0 1 6.500-10.700z" fill="#eaf6ee" stroke="#22a457" stroke-width="1.700"/>
  <path d="M582 588c.500 3.400 2.600 5.400 6 6l1.200-1.600-1.900-1.200-.900.800c-1.100-.500-1.900-1.300-2.400-2.500l.800-.800-1-1.900z" fill="#22a457"/>
  <circle cx="594.500" cy="583" r="4.700" fill="#2a7f8c"/>
  <text x="594.500" y="585.400" font-size="6.500" fill="#fff" text-anchor="middle">61</text>
  <!-- xampp -->
  <rect x="610" y="582" width="17" height="16" rx="2" fill="#e8762b"/>
  <path d="M613.500 586.500c2-1.500 3.500 0 5 1.500 1.500-1.500 3-3 5-1.500v7c-2 1.500-3.500 0-5-1.500-1.500 1.500-3 3-5 1.500z" fill="none" stroke="#fff" stroke-width="1.500"/>
  <!-- postgres -->
  <path d="M641.500 586c0-3 3.500-4.500 6-3.500 1.200-1 4-1 5.500 0 3 .500 5 3 4 6.500-.500 2-1.500 4-3 5l-.500 3.500c-1 1-3 1-3.500-.500l-.300-4c-1.700.500-3.200 0-4.200-1-2.500-.500-4-3-4-6z" fill="#336791"/>
  <path d="M647.500 584.500c-1 3-.500 7 1 9M652 584c1.500 2.500 1.500 6 .500 9" fill="none" stroke="#dfe9f3" stroke-width="0.800"/>
  <!-- db tools -->
  <ellipse cx="680" cy="585.500" rx="4.600" ry="2" fill="#f3d24a"/><path d="M675.400 585.500v6c0 2.600 9.200 2.600 9.200 0v-6" fill="#e9bf2e"/>
  <path d="M677 597l9-8M686 597l-9-8" stroke="#e08a1e" stroke-width="1.500"/>
  <path d="M671.500 586v-3.500h3.500M689 586v-3.500h-3.500M671.500 594.500v3.500h3.500M689 594.500v3.500h-3.500" fill="none" stroke="#3aa845" stroke-width="1.200"/>
  <!-- dark blue circle -->
  <circle cx="711" cy="590" r="8.500" fill="#1f3b6b"/>
  <circle cx="711" cy="590" r="5.600" fill="none" stroke="#e8eef6" stroke-width="1"/>
  <path d="M707.500 588.300h6.500M712.500 586.600l1.800 1.700-1.800 1.700M714.500 591.700H708M709.500 590l-1.800 1.700 1.800 1.700" fill="none" stroke="#e8eef6" stroke-width="1"/>
  <!-- chrome -->
  <circle cx="742" cy="590" r="8.500" fill="#e33b2e"/>
  <path d="M742 590l-7.400 4.200a8.500 8.500 0 0 0 7.400 4.300l3.700-6.400z" fill="#2da94f"/>
  <path d="M742 590l3.700 2.100-3.700 6.400a8.500 8.500 0 0 0 7.400-12.700h-7.400z" fill="#fbc116"/>
  <path d="M734.600 594.200a8.500 8.500 0 0 1 0-8.400l3.700 6.300z" fill="#2da94f"/>
  <circle cx="742" cy="590" r="3.900" fill="#fff"/><circle cx="742" cy="590" r="3" fill="#3f7fe8"/>
  <!-- foxit -->
  <path d="M764.700 582h12.300l3.600 3.600v12.400h-15.900z" fill="#f08421"/><path d="M777 582v3.600h3.600z" fill="#fbd0a0"/>
  <text x="772" y="593.200" font-size="10" font-weight="bold" font-style="italic" fill="#fff" text-anchor="middle">G</text>
  <rect x="767.500" y="594.300" width="8" height="2.200" fill="#fff" opacity="0.850"/>
  <!-- notepad -->
  <rect x="797.500" y="583" width="13.500" height="15" rx="1.200" fill="#58bfea"/>
  <rect x="797.500" y="583" width="13.500" height="3" rx="1" fill="#2b6f9b"/>
  <path d="M800 588.500h8.500M800 590.800h8.500M800 593.100h8.500M800 595.400h8.500" stroke="#1f6f9f" stroke-width="0.900"/>
  <rect x="797.500" y="597" width="13.500" height="1.500" fill="#e8a33a"/>
  <!-- powerpoint -->
  <circle cx="835" cy="590" r="8.300" fill="#ed6c47"/>
  <path d="M835 581.700a8.300 8.300 0 0 1 8.300 8.300H835z" fill="#ff8f6b"/><path d="M826.700 590h16.600a8.300 8.300 0 0 1-16.600 0z" fill="#d35230"/>
  <rect x="825.500" y="585.700" width="8.600" height="8.600" rx="1" fill="#c43e1c"/>
  <text x="829.800" y="592.500" font-size="6.500" font-weight="bold" fill="#fff" text-anchor="middle">P</text>
  <!-- settings -->
  <circle cx="865.600" cy="590" r="6.200" fill="none" stroke="#737b86" stroke-width="3.200"/>
  <circle cx="865.600" cy="590" r="8" fill="none" stroke="#737b86" stroke-width="2.600" stroke-dasharray="3.140 3.140"/>
  <circle cx="865.600" cy="590" r="3.200" fill="#2b7de0"/>
  <!-- paint -->
  <path d="M897 582c5 0 8.500 3.200 8.500 7.400 0 3-2.400 3.600-4.200 3.200-1.700-.400-2.800.700-2 2.400.700 1.500-.300 3-2.600 3-4.600 0-8-3.600-8-8s3.700-8 8.300-8z" fill="#2f9fd8"/>
  <circle cx="893" cy="587" r="1.500" fill="#f3d24a"/><circle cx="897.500" cy="585" r="1.500" fill="#e8533a"/><circle cx="892.500" cy="592" r="1.500" fill="#7fd04a"/><circle cx="902" cy="587.500" r="1.500" fill="#fff"/>
  <path d="M900.500 588l1.800 0 .600 9.500h-3z" fill="#d58b3a"/><path d="M900.200 583.500h2.400v4.500h-2.400z" fill="#4a5a6a"/>
  <!-- indicators -->
  <g fill="#8b939c">
    <rect x="368.500" y="602" width="4.500" height="2" rx="1"/><rect x="492.200" y="602" width="4.500" height="2" rx="1"/><rect x="582.800" y="602" width="4.500" height="2" rx="1"/>
    <rect x="770.400" y="602" width="4.500" height="2" rx="1"/><rect x="802" y="602" width="4.500" height="2" rx="1"/><rect x="832.800" y="602" width="4.500" height="2" rx="1"/>
    <rect x="863.400" y="602" width="4.500" height="2" rx="1"/><rect x="895.400" y="602" width="4.500" height="2" rx="1"/>
  </g>
  <!-- tray -->
  <path d="M929.500 593l5-5 5 5" fill="none" stroke="#1c1c1c" stroke-width="1.200"/>
  <rect x="951.500" y="585.500" width="9" height="6.600" fill="none" stroke="#1c1c1c" stroke-width="1"/><path d="M956 592.100v2.400M953 595h6.500M960.500 585v-1.500h2v8" fill="none" stroke="#1c1c1c" stroke-width="1"/>
  <path d="M968 588.600h2l2.600-2.400v8l-2.600-2.400h-2z" fill="none" stroke="#1c1c1c" stroke-width="0.900"/><path d="M974.600 588.400l3.600 3.600M978.200 588.400l-3.600 3.600" stroke="#1c1c1c" stroke-width="0.900"/>
  <rect x="986" y="587" width="9" height="5.600" rx="0.800" fill="#1c1c1c"/><rect x="995" y="588.600" width="1.300" height="2.400" fill="#1c1c1c"/><path d="M985 585.500l3 1.500-1 2" fill="none" stroke="#1c1c1c" stroke-width="1"/>
  <circle cx="1062" cy="590.400" r="5.200" fill="#2a7f8c"/>
  <text x="1062" y="593.200" font-size="7.500" fill="#fff" text-anchor="middle">5</text>
</svg>
<!-- ===== right pane icons ===== -->
<svg style="left:600px;top:57px" width="480" height="72" viewBox="600 57 480 72">
  <!-- env: restore / maximize -->
  <rect x="1039.500" y="65" width="9.500" height="7" fill="#2f3a45" stroke="#8d98a3" stroke-width="1"/><rect x="1039" y="64.500" width="10.500" height="1.800" fill="#8d98a3"/>
  <rect x="1036.500" y="68" width="9.500" height="7" fill="#2f3a45" stroke="#8d98a3" stroke-width="1"/><rect x="1036" y="67.500" width="10.500" height="1.800" fill="#8d98a3"/>
  <rect x="1052.500" y="65" width="12.500" height="10" fill="none" stroke="#8d98a3" stroke-width="1"/><rect x="1052" y="64.500" width="13.500" height="2" fill="#8d98a3"/>
  <!-- plots: minimize / restore -->
  <rect x="1036.500" y="100.500" width="12" height="4" rx="0.800" fill="#8d98a3"/><rect x="1037.500" y="101.700" width="10" height="1.600" fill="#2f3a45"/>
  <rect x="1055.500" y="95.500" width="9.500" height="7" fill="#2f3a45" stroke="#8d98a3" stroke-width="1"/><rect x="1055" y="95" width="10.500" height="1.800" fill="#8d98a3"/>
  <rect x="1052.500" y="98.500" width="9.500" height="6.500" fill="#2f3a45" stroke="#8d98a3" stroke-width="1"/><rect x="1052" y="98" width="10.500" height="1.800" fill="#8d98a3"/>
  <!-- plots back / forward -->
  <path d="M616 118.800l5.800-5v3h6.600v4h-6.600v3z" fill="#a8cdee"/>
  <path d="M651.500 118.800l-5.800-5v3h-6.600v4h6.600v3z" fill="#77838e"/>
  <!-- zoom -->
  <path d="M665 124l5.400-6" stroke="#c8793a" stroke-width="1.700" stroke-linecap="round"/>
  <circle cx="673" cy="115.400" r="3.600" fill="#d9f0e4" stroke="#35a87a" stroke-width="1.200"/>
  <path d="M673 113.500v3.800M671.100 115.400h3.800" stroke="#1f9a68" stroke-width="1.100"/>
  <!-- export -->
  <rect x="724.500" y="113.200" width="13" height="10.400" fill="#f2f3f4"/>
  <rect x="725.700" y="114.300" width="10.600" height="8.200" fill="#7fb2e0"/>
  <path d="M725.700 122.500l3.600-4 2.400 2.200 2.200-1.800 2.400 2v1.600z" fill="#e8c860"/>
  <path d="M725.700 122.500v-1.500l3.600-2.500 2.400 2.200 2.200-1.800 2.400 2v1.600z" fill="#5c8a4a" opacity="0.550"/>
  <path d="M721.500 116.200h5v-1.800l3 2.600-3 2.600v-1.800h-5z" fill="#2c3038"/>
  <!-- remove plot -->
  <rect x="796.500" y="115" width="9.800" height="9.400" fill="#f0f1f2"/>
  <circle cx="795.300" cy="116.600" r="3.700" fill="#c9302c"/>
  <path d="M793.700 115l3.200 3.200M796.900 115l-3.200 3.200" stroke="#fff" stroke-width="1.200"/>
  <!-- broom -->
  <path d="M831.500 112.400l-5.500 6.300" stroke="#b5533c" stroke-width="1.500" stroke-linecap="round"/>
  <path d="M823.600 116.800l4.600 3.600-3 4.200-6-2.800z" fill="#e4c778"/>
  <path d="M823.600 116.800l4.600 3.600" stroke="#b98f3a" stroke-width="1.200"/>
  <path d="M821 121.500l1.500-2.200M823.300 122.600l1.500-2.200" stroke="#c7a350" stroke-width="0.600"/>
  <!-- publish -->
  <circle cx="987.500" cy="118.800" r="4.700" fill="none" stroke="#2b8ad6" stroke-width="1.900" stroke-dasharray="10.500 4.200" transform="rotate(-30 987.500 118.800)"/>
  <circle cx="987.500" cy="118.800" r="1.900" fill="#2b8ad6"/>
  <path d="M980.500 117l3.200-1 .2 3.200z" fill="#2b8ad6"/><path d="M994.500 120.600l-3.200 1-.2-3.200z" fill="#2b8ad6"/>
  <!-- refresh -->
  <path d="M1065.300 121.200a4.900 4.900 0 1 1-1.200-6.300" fill="none" stroke="#cfd4d8" stroke-width="2.200"/>
  <path d="M1061.800 112.300h5.200v5.200z" fill="#cfd4d8"/>
</svg>
<!-- ===== UI text labels ===== -->
<div class="t" style="left:15px;top:4.51px;font-size:9.2px;color:#9c9c9c;transform:scaleX(0.8297);">TOUS_STATISTICIEN_WEBINAIRE_TEXT_MINING - RStudio</div>
<div class="t" style="left:4px;top:20.00px;font-size:9.1px;color:#fff;transform:scaleX(0.8865);">File</div>
<div class="t" style="left:25px;top:20.00px;font-size:9.1px;color:#fff;transform:scaleX(0.9566);">Edit</div>
<div class="t" style="left:48px;top:20.00px;font-size:9.1px;color:#fff;transform:scaleX(0.9423);">Code</div>
<div class="t" style="left:77px;top:20.00px;font-size:9.1px;color:#fff;transform:scaleX(0.9202);">View</div>
<div class="t" style="left:103.5px;top:20.00px;font-size:9.1px;color:#fff;transform:scaleX(0.9144);">Plots</div>
<div class="t" style="left:130.5px;top:20.00px;font-size:9.1px;color:#fff;transform:scaleX(0.8494);">Session</div>
<div class="t" style="left:167px;top:20.00px;font-size:9.1px;color:#fff;transform:scaleX(0.9389);">Build</div>
<div class="t" style="left:194.5px;top:20.00px;font-size:9.1px;color:#fff;transform:scaleX(0.9136);">Debug</div>
<div class="t" style="left:228.5px;top:20.00px;font-size:9.1px;color:#fff;transform:scaleX(0.9110);">Profile</div>
<div class="t" style="left:260px;top:20.00px;font-size:9.1px;color:#fff;transform:scaleX(0.8944);">Tools</div>
<div class="t" style="left:288.5px;top:20.00px;font-size:9.1px;color:#fff;transform:scaleX(0.9350);">Help</div>
<div class="t" style="left:203.5px;top:39.43px;font-size:9.3px;color:#c3c9cf;transform:scaleX(1.0846);">Go to file/function</div>
<div class="t" style="left:354.5px;top:39.43px;font-size:9.3px;color:#fff;transform:scaleX(1.0374);">Addins</div>
<div class="t" style="left:862.5px;top:39.43px;font-size:9.3px;color:#fff;transform:scaleX(0.9193);">TOUS_STATISTICIEN_WEBINAIRE_TEXT_MINING</div>
<div class="t" style="left:32.5px;top:64.53px;font-size:9.3px;color:#a4b5d4;transform:scaleX(0.9116);">TP_BON_WEBINAIRE_TOUS_STATISTICIE...*</div>
<div class="t" style="left:255px;top:64.53px;font-size:9.3px;color:#fff;transform:scaleX(0.9629);">discours_BOURASSA_1910</div>
<div class="t" style="left:118.5px;top:85.73px;font-size:9.3px;color:#fff;transform:scaleX(0.9898);">Source on Save</div>
<div class="t" style="left:408px;top:85.73px;font-size:9.3px;color:#fff;transform:scaleX(0.9671);">Run</div>
<div class="t" style="left:529px;top:85.73px;font-size:9.3px;color:#fff;transform:scaleX(0.9502);">Source</div>
<div class="t" style="left:20.5px;top:355.06px;font-size:8.9px;color:#fff;transform:scaleX(1.0102);">227:1</div>
<div class="t" style="left:75px;top:355.06px;font-size:8.9px;color:#fff;transform:scaleX(1.1079);">(Untitled)</div>
<div class="t" style="left:555px;top:355.06px;font-size:8.9px;color:#fff;transform:scaleX(1.0268);">R Script</div>
<div class="t" style="left:15px;top:378.93px;font-size:9.3px;color:#fff;transform:scaleX(0.9964);">Console</div>
<div class="t" style="left:66px;top:378.93px;font-size:9.3px;color:#fff;transform:scaleX(0.9959);">Terminal</div>
<div class="t" style="left:129px;top:378.93px;font-size:9.3px;color:#fff;transform:scaleX(1.0158);">Background Jobs</div>
<div class="t" style="left:40px;top:399.68px;font-size:9px;color:#fff;transform:scaleX(1.0511);">R 4.4.1</div>
<div class="t" style="left:76.5px;top:399.68px;font-size:9px;color:#aab2bb;transform:scaleX(0.6672);">·</div>
<div class="t" style="left:617.5px;top:64.93px;font-size:9.3px;color:#c8cdd3;transform:scaleX(1.0247);">Environment</div>
<div class="t" style="left:687.5px;top:64.93px;font-size:9.3px;color:#c8cdd3;transform:scaleX(1.0195);">History</div>
<div class="t" style="left:733.5px;top:64.93px;font-size:9.3px;color:#c8cdd3;transform:scaleX(1.0251);">Connections</div>
<div class="t" style="left:803px;top:64.93px;font-size:9.3px;color:#c8cdd3;transform:scaleX(1.0109);">Tutorial</div>
<div class="t" style="left:617.5px;top:94.73px;font-size:9.3px;color:#fff;transform:scaleX(0.9421);">Files</div>
<div class="t" style="left:652px;top:94.73px;font-size:9.3px;color:#fff;transform:scaleX(0.9673);">Plots</div>
<div class="t" style="left:688.5px;top:94.73px;font-size:9.3px;color:#fff;transform:scaleX(0.9549);">Packages</div>
<div class="t" style="left:744px;top:94.73px;font-size:9.3px;color:#fff;transform:scaleX(0.9933);">Help</div>
<div class="t" style="left:780px;top:94.73px;font-size:9.3px;color:#fff;transform:scaleX(0.9908);">Viewer</div>
<div class="t" style="left:824.5px;top:94.73px;font-size:9.3px;color:#fff;transform:scaleX(1.0245);">Presentation</div>
<div class="t" style="left:682.5px;top:115.53px;font-size:9.3px;color:#fff;transform:scaleX(1.0516);">Zoom</div>
<div class="t" style="left:740px;top:115.53px;font-size:9.3px;color:#fff;transform:scaleX(1.0045);">Export</div>
<div class="t" style="left:997px;top:115.53px;font-size:9.3px;color:#fff;transform:scaleX(1.0163);">Publish</div>
<div class="t" style="left:635px;top:9.25px;font-size:8.8px;color:#202020;transform:scaleX(0.9566);">Vous partagez une autre fenêtre d'application.</div>
<div class="t" style="left:821px;top:9.25px;font-size:8.8px;color:#fff;transform:scaleX(0.9638);">Arrêter le partage</div>
<div class="t" style="left:36.5px;top:580.57px;font-size:8.3px;color:#1b1b1b;transform:scaleX(0.9975);">22°C</div>
<div class="t" style="left:36.5px;top:592.57px;font-size:8.3px;color:#4a4a4a;transform:scaleX(1.0268);">Ciel couvert</div>
<div class="t" style="left:1030px;top:580.57px;font-size:8.3px;color:#1b1b1b;transform:scaleX(0.9629);">22:49</div>
<div class="t" style="left:1006.5px;top:592.57px;font-size:8.3px;color:#1b1b1b;transform:scaleX(1.0471);">08/09/2024</div>
<div class="abs" style="left:84px;top:392px;width:518px;height:18px;overflow:hidden"><div class="t" style="left:0;top:7.68px;font-size:9.0px;color:#fff;transform:scaleX(0.9737)">D:/TOUS STATISTICIEN/2024/2024 FORMATION/R/TOUS STATISTICIEN_Text_Mining/TOUS_STATISTICIEN_WEBINAIRE_TEXT_MINING/</div></div>
</body>
</html>
